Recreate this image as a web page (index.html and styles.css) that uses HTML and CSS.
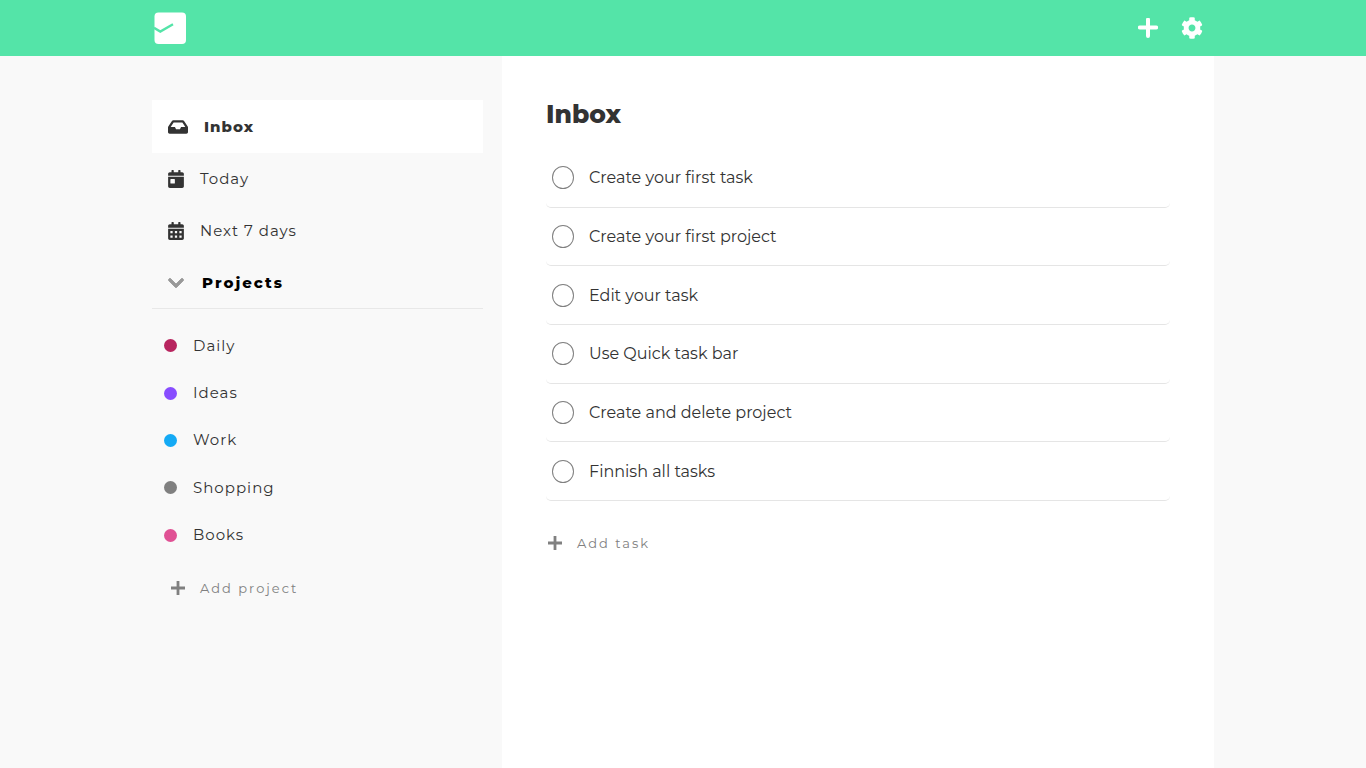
FILE: index.html
```html
<!DOCTYPE html>
<html lang="en">
<head>
<meta charset="utf-8">
<meta name="viewport" content="width=device-width, initial-scale=1">
<title>Inbox</title>
<link rel="stylesheet" href="styles.css">
</head>
<body>
<header class="header">
  <div class="header-inner">
    <a class="logo" href="#" aria-label="Home">
      <svg width="32" height="32" viewBox="0 0 32 32"><rect x=".5" y=".5" width="31.500" height="31.500" rx="4" fill="#fff"/><path d="M0 15.800l6.300 3.700L19 12.300" fill="none" stroke="#54e4a8" stroke-width="2.400"/></svg>
    </a>
    <div class="header-actions">
      <button class="icon-button" type="button" aria-label="Quick add task">
        <svg width="20" height="20" viewBox="0 0 20 20"><path d="M10 1.500v16.500M1.800 9.500h16.400" stroke="#fff" stroke-width="4" stroke-linecap="round"/></svg>
      </button>
      <button class="icon-button" type="button" aria-label="Settings">
        <svg width="22" height="24" viewBox="0 0 512 512" fill="#fff"><path d="M487.4 315.7l-42.6-24.6c4.3-23.2 4.3-47 0-70.2l42.6-24.6c4.9-2.8 7.1-8.6 5.5-14-11.1-35.6-30-67.8-54.7-94.6-3.8-4.1-10-5.1-14.8-2.3L380.8 110c-17.9-15.4-38.5-27.3-60.8-35.1V25.8c0-5.6-3.9-10.5-9.4-11.7-36.7-8.2-74.3-7.8-109.2 0-5.5 1.2-9.4 6.1-9.4 11.7V75c-22.2 7.9-42.8 19.8-60.8 35.1L88.7 85.5c-4.9-2.8-11-1.9-14.8 2.3-24.7 26.7-43.6 58.9-54.7 94.6-1.700 5.400.600 11.200 5.500 14L67.300 221c-4.300 23.200-4.300 47 0 70.200l-42.600 24.600c-4.900 2.800-7.100 8.600-5.500 14 11.100 35.600 30 67.800 54.700 94.600 3.800 4.100 10 5.100 14.800 2.300l42.600-24.600c17.900 15.400 38.500 27.300 60.800 35.100v49.200c0 5.600 3.900 10.500 9.400 11.700 36.700 8.200 74.300 7.800 109.200 0 5.500-1.200 9.400-6.100 9.400-11.700v-49.200c22.200-7.900 42.800-19.800 60.800-35.100l42.600 24.600c4.900 2.800 11 1.900 14.800-2.300 24.700-26.700 43.600-58.900 54.700-94.600 1.500-5.500-.7-11.300-5.600-14.100zM256 336c-44.100 0-80-35.900-80-80s35.900-80 80-80 80 35.900 80 80-35.900 80-80 80z"/></svg>
      </button>
    </div>
  </div>
</header>
<div class="layout">
  <aside class="sidebar">
    <nav class="nav" aria-label="Views">
      <a class="nav-item active" href="#">
        <svg width="20" height="18" viewBox="0 0 576 512"><path d="M567.938 243.908L462.25 85.374A48.003 48.003 0 0 0 422.311 64H153.689a48 48 0 0 0-39.938 21.374L8.062 243.908A47.994 47.994 0 0 0 0 270.533V400c0 26.51 21.49 48 48 48h480c26.51 0 48-21.49 48-48V270.533a47.994 47.994 0 0 0-8.062-26.625zM162.252 128h251.497l85.333 128H376l-32 64H232l-32-64H76.918l85.334-128z"/></svg>
        Inbox
      </a>
      <a class="nav-item" href="#">
        <svg width="16" height="18" viewBox="0 0 448 512"><path d="M0 464c0 26.500 21.500 48 48 48h352c26.500 0 48-21.500 48-48V192H0v272zm64-192c0-8.800 7.200-16 16-16h96c8.800 0 16 7.200 16 16v96c0 8.800-7.200 16-16 16H80c-8.800 0-16-7.200-16-16v-96zM400 64h-48V16c0-8.800-7.200-16-16-16h-32c-8.800 0-16 7.200-16 16v48H160V16c0-8.800-7.200-16-16-16h-32c-8.800 0-16 7.200-16 16v48H48C21.500 64 0 85.500 0 112v48h448v-48c0-26.500-21.500-48-48-48z"/></svg>
        Today
      </a>
      <a class="nav-item" href="#">
        <svg width="16" height="18" viewBox="0 0 448 512"><path fill-rule="evenodd" d="M0 464c0 26.500 21.500 48 48 48h352c26.500 0 48-21.500 48-48V192H0v272zM64 256h64v64H64zM192 256h64v64h-64zM320 256h64v64h-64zM64 384h64v64H64zM192 384h64v64h-64zM320 384h64v64h-64zM400 64h-48V16c0-8.800-7.200-16-16-16h-32c-8.800 0-16 7.200-16 16v48H160V16c0-8.800-7.200-16-16-16h-32c-8.800 0-16 7.200-16 16v48H48C21.500 64 0 85.500 0 112v48h448v-48c0-26.500-21.500-48-48-48z"/></svg>
        Next 7 days
      </a>
    </nav>
    <button class="projects-toggle" type="button" aria-expanded="true">
      <svg width="16" height="18" viewBox="0 0 448 512" fill="#999"><path d="M207.029 381.476L12.686 187.132c-9.373-9.373-9.373-24.569 0-33.941l22.667-22.667c9.357-9.357 24.522-9.375 33.901-.04L224 284.505l154.745-154.021c9.379-9.335 24.544-9.317 33.901.04l22.667 22.667c9.373 9.373 9.373 24.569 0 33.941L240.971 381.476c-9.373 9.372-24.569 9.372-33.942 0z" stroke="#999" stroke-width="24"/></svg>
      Projects
    </button>
    <nav class="projects" aria-label="Projects">
      <a class="project" href="#"><span class="dot daily"></span>Daily</a>
      <a class="project" href="#"><span class="dot ideas"></span>Ideas</a>
      <a class="project" href="#"><span class="dot work"></span>Work</a>
      <a class="project" href="#"><span class="dot shopping"></span>Shopping</a>
      <a class="project" href="#"><span class="dot books"></span>Books</a>
    </nav>
    <button class="add-button add-project" type="button">
      <svg width="14" height="14" viewBox="0 0 14 14"><path d="M7 0v14M0 7h14" stroke="#808080" stroke-width="2.800"/></svg>
      Add project
    </button>
  </aside>
  <main class="main">
    <h1 class="title">Inbox</h1>
    <ul class="tasks">
      <li class="task"><label class="task-label"><input class="check" type="checkbox">Create your first task</label></li>
      <li class="task"><label class="task-label"><input class="check" type="checkbox">Create your first project</label></li>
      <li class="task"><label class="task-label"><input class="check" type="checkbox">Edit your task</label></li>
      <li class="task"><label class="task-label"><input class="check" type="checkbox">Use Quick task bar</label></li>
      <li class="task"><label class="task-label"><input class="check" type="checkbox">Create and delete project</label></li>
      <li class="task"><label class="task-label"><input class="check" type="checkbox">Finnish all tasks</label></li>
    </ul>
    <button class="add-button" type="button">
      <svg width="14" height="14" viewBox="0 0 14 14"><path d="M7 0v14M0 7h14" stroke="#808080" stroke-width="2.800"/></svg>
      Add task
    </button>
  </main>
</div>
</body>
</html>
```
FILE: styles.css
```css
* {
  box-sizing: border-box;
}

body {
  margin: 0;
  min-height: 100vh;
  display: flex;
  flex-direction: column;
  background: #f9f9f9;
  color: #333;
  font-family: Montserrat, Inter, sans-serif;
  font-size: 16px;
  line-height: 20px;
}

button {
  font: inherit;
  color: inherit;
  background: none;
  border: 0;
  padding: 0;
  cursor: pointer;
}

a {
  color: inherit;
  text-decoration: none;
}

svg {
  display: block;
  flex: none;
}

.header {
  background: #54e4a8;
}

.header-inner,
.layout {
  width: 100%;
  max-width: 1062px;
  margin: 0 auto;
}

.header-inner {
  display: flex;
  align-items: center;
  justify-content: space-between;
  padding: 12px 11px 12px 2px;
}

.header-actions {
  display: flex;
  align-items: center;
  gap: 23px;
}

.layout {
  flex: 1;
  display: grid;
  grid-template-columns: 331fr 712fr;
  gap: 19px;
}

.sidebar {
  padding-top: 44px;
}

.nav {
  display: flex;
  flex-direction: column;
}

.nav-item {
  display: flex;
  align-items: center;
  gap: 16px;
  padding: 16px;
  font-size: 15px;
  font-weight: 400;
  letter-spacing: 1px;
}

.nav-item svg {
  fill: #333;
}

.nav-item.active {
  background: #fff;
  padding: 17px 16px 16px;
  font-weight: 800;
}

.projects-toggle {
  display: flex;
  align-items: center;
  gap: 18px;
  width: 100%;
  padding: 16px 16px 15px;
  border-bottom: 1px solid #e8e8e8;
  color: #000;
  font-size: 15px;
  font-weight: 800;
  letter-spacing: 2px;
}

.projects {
  display: grid;
  grid-auto-rows: 1fr;
  min-height: 237px;
  margin-top: 13px;
}

.project {
  display: flex;
  align-items: center;
  gap: 16px;
  padding-left: 12px;
  font-size: 15px;
  font-weight: 400;
  letter-spacing: 1px;
}

.dot {
  width: 13px;
  height: 13px;
  border-radius: 50%;
}

.daily { background: #b8255f; }
.ideas { background: #884dff; }
.work { background: #14aaf5; }
.shopping { background: #808080; }
.books { background: #e05194; }

.add-button {
  display: flex;
  align-items: center;
  gap: 15px;
  margin-top: 32px;
  color: #808080;
  font-size: 13px;
  font-weight: 400;
  letter-spacing: 2px;
}

.add-project {
  margin: 19px 0 0 19px;
}

.main {
  background: #fff;
  padding: 44px;
}

.title {
  margin: 0;
  font-size: 25px;
  line-height: 28px;
  font-weight: 800;
}

.tasks {
  list-style: none;
  margin: 21px 0 0;
  padding: 0;
  min-height: 352px;
  display: grid;
  grid-auto-rows: 1fr;
}

.task {
  display: flex;
  border-bottom: 1px solid #e5e5e5;
  border-radius: 5px;
}

.task-label {
  flex: 1;
  display: flex;
  align-items: center;
  gap: 15px;
  padding-left: 6px;
  line-height: 23px;
}

.check {
  appearance: none;
  flex: none;
  width: 22px;
  height: 23px;
  margin: 0;
  border: 1px solid #808080;
  border-radius: 50%;
}

.check:checked {
  background: #808080;
}

.main .add-button {
  margin-left: 2px;
}
```
